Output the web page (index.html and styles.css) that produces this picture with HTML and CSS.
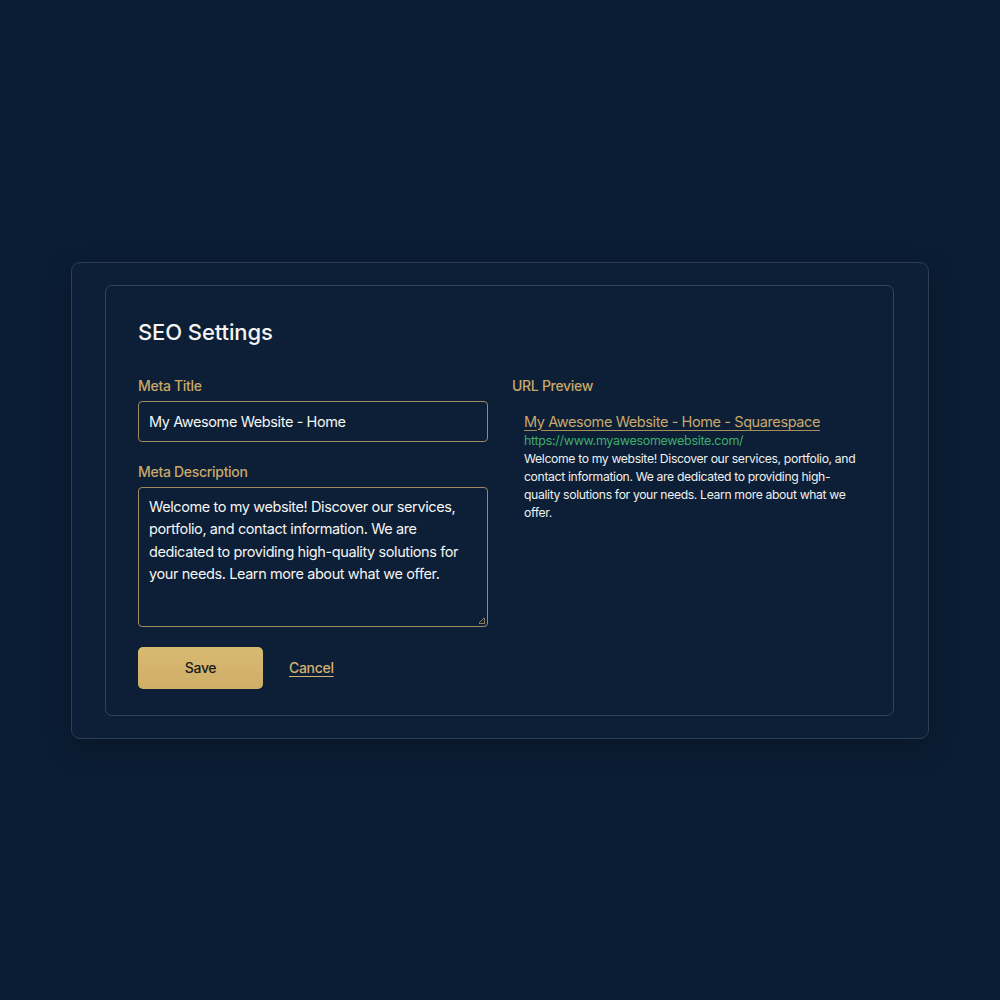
FILE: index.html
```html
<!DOCTYPE html>
<html>
<head>
<meta charset="utf-8">
<link rel="stylesheet" href="styles.css">
</head>
<body>
<div class="outer">
  <div class="inner">
    <h1 class="title">SEO Settings</h1>
    <div class="grid">
      <div class="col">
        <label class="label">Meta Title</label>
        <div class="input">My Awesome Website - Home</div>
        <label class="label label-gap">Meta Description</label>
        <div class="textarea">Welcome to my website! Discover our services, portfolio, and contact information. We are dedicated to providing high-quality solutions for your needs. Learn more about what we offer.<span class="grip"></span></div>
        <div class="actions">
          <button class="save">Save</button>
          <a class="cancel">Cancel</a>
        </div>
      </div>
      <div class="col">
        <label class="label">URL Preview</label>
        <div class="preview">
          <div class="p-title">My Awesome Website - Home - Squarespace</div>
          <div class="p-url">https://www.myawesomewebsite.com/</div>
          <div class="p-desc">Welcome to my website! Discover our services, portfolio, and contact information. We are dedicated to providing high-quality solutions for your needs. Learn more about what we offer.</div>
        </div>
      </div>
    </div>
  </div>
</div>
</body>
</html>
```
FILE: styles.css
```css
* { box-sizing: border-box; }
html, body { margin: 0; padding: 0; }
body {
  background: #0b1d34;
  font-family: Inter, "Liberation Sans", sans-serif;
  min-height: 100vh;
  display: flex;
  align-items: center;
  justify-content: center;
  color: #f2f2f0;
}
.outer {
  width: 858px;
  padding: 22px 34px 22px 33px;
  border: 1px solid #2b3f57;
  border-radius: 9px;
  background: #0c1f37;
  box-shadow: 0 10px 30px rgba(0,0,0,0.25);
}
.inner {
  border: 1px solid #2e4560;
  border-radius: 7px;
  padding: 33px 32px 26px 32px;
  background: #0c1f37;
}
.title {
  margin: 0 0 32px 0;
  font-size: 22px;
  font-weight: 500;
  line-height: 26px;
  color: #f5f5f3;
  letter-spacing: -0.1px;
}
.grid {
  display: grid;
  grid-template-columns: 350px 1fr;
  gap: 24px;
}
.col { display: flex; flex-direction: column; }
.label {
  color: #c9a769;
  font-size: 14px;
  font-weight: 500;
  line-height: 17px;
  margin-bottom: 7px;
  letter-spacing: -0.3px;
}
.label-gap { margin-top: 21px; }
.input {
  height: 41px;
  border: 1px solid #a08a5e;
  border-radius: 4px;
  padding: 0 10px;
  display: flex;
  align-items: center;
  font-size: 14.5px;
  letter-spacing: -0.4px;
  color: #f5f5f3;
}
.textarea {
  position: relative;
  height: 140px;
  border: 1px solid #a08a5e;
  border-radius: 4px;
  padding: 8px 10px;
  font-size: 14.5px;
  line-height: 22.5px;
  letter-spacing: -0.4px;
  color: #f5f5f3;
}
.grip {
  position: absolute;
  right: 2px;
  bottom: 2px;
  width: 6px;
  height: 6px;
  border-right: 1px solid #8a7a5a;
  border-bottom: 1px solid #8a7a5a;
  background: linear-gradient(135deg, transparent 45%, #8a7a5a 50%, transparent 55%);
}
.actions {
  display: flex;
  align-items: center;
  gap: 26px;
  margin-top: 20px;
}
.save {
  width: 125px;
  height: 42px;
  border: none;
  border-radius: 5px;
  background: linear-gradient(180deg, #d8b972 0%, #cfae68 100%);
  color: #1a1a18;
  font-family: Inter, "Liberation Sans", sans-serif;
  font-size: 14px;
  font-weight: 500;
  letter-spacing: -0.3px;
}
.cancel {
  color: #d2b173;
  font-size: 14px;
  font-weight: 500;
  letter-spacing: -0.3px;
  text-decoration: underline;
  text-underline-offset: 3px;
}
.preview {
  padding: 11px 0 0 12px;
}
.p-title {
  color: #c9a86c;
  font-size: 14.5px;
  line-height: 20px;
  letter-spacing: -0.4px;
  text-decoration: underline;
  text-underline-offset: 3px;
  text-decoration-color: #a88d5c;
}
.p-url {
  color: #3fae6a;
  font-size: 12.5px;
  line-height: 18px;
  letter-spacing: -0.3px;
}
.p-desc {
  color: #f0f0ee;
  font-size: 12.2px;
  line-height: 18px;
  letter-spacing: -0.35px;
  max-width: 338px;
}
```
